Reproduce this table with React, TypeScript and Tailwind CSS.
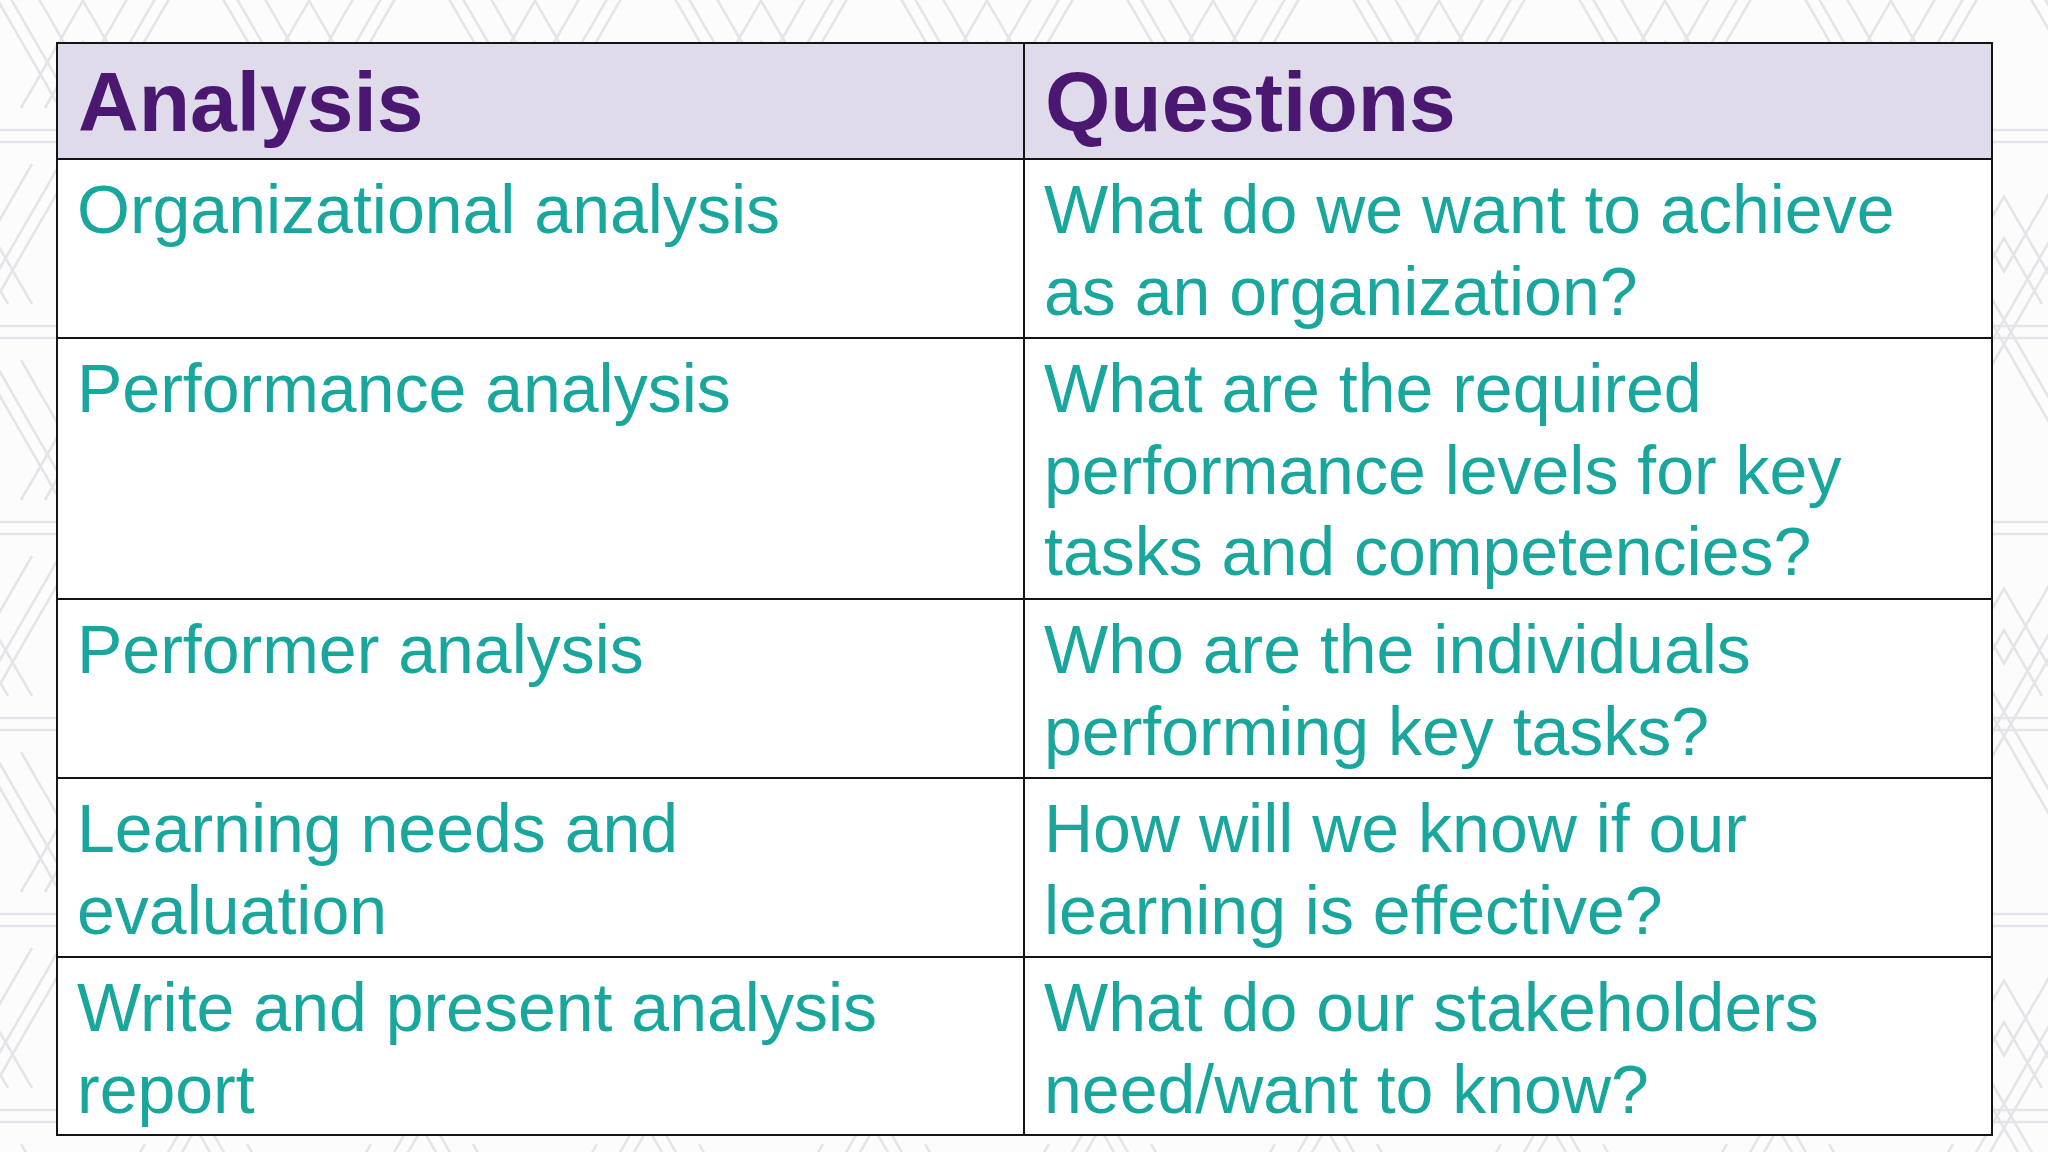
import React from "react";

const rows: { left: string[]; right: string[] }[] = [
  { left: ["Organizational analysis"], right: ["What do we want to achieve", "as an organization?"] },
  { left: ["Performance analysis"], right: ["What are the required", "performance levels for key", "tasks and competencies?"] },
  { left: ["Performer analysis"], right: ["Who are the individuals", "performing key tasks?"] },
  { left: ["Learning needs and", "evaluation"], right: ["How will we know if our", "learning is effective?"] },
  { left: ["Write and present analysis", "report"], right: ["What do our stakeholders", "need/want to know?"] },
];

function Lines({ lines }: { lines: string[] }) {
  return (
    <>
      {lines.map((l, i) => (
        <div key={i} className="whitespace-nowrap">
          {l}
        </div>
      ))}
    </>
  );
}

const S = 226;
const H = 196;

function tri(cx: number, by: number, half: number, up: boolean) {
  const h = half * 1.732;
  const ty = up ? by - h : by + h;
  return `M${cx - half} ${by} L${cx} ${ty} L${cx + half} ${by}`;
}

function Background() {
  const diag: string[] = [];
  for (const dx of [-S, 0, S]) {
    for (const off of [-7, 7]) {
      diag.push(`M${dx + off} 0 L${dx + S + off} ${2 * H}`);
      diag.push(`M${dx + S + off} 0 L${dx + off} ${2 * H}`);
    }
  }
  const horiz: string[] = [];
  for (const y of [0, H, 2 * H]) {
    for (const off of [-6, 6]) {
      horiz.push(`M0 ${y + off} L${S} ${y + off}`);
    }
  }
  const inner: string[] = [];
  // up triangles: base at y=H (apex S/2? no) -- triangles with base on y=H between x=0..S pointing up have apex (S/2,0)
  for (const dx of [-S, 0, S]) {
    inner.push(tri(dx + S / 2, H - 28, 62, true));
    inner.push(tri(dx + S / 2, H - 28, 38, true));
    inner.push(tri(dx, H + 28, 62, false));
    inner.push(tri(dx, 2 * H - 28, 62, true));
    inner.push(tri(dx, 2 * H - 28, 38, true));
    inner.push(tri(dx + S / 2, 28, 62, false));
  }
  return (
    <svg className="absolute inset-0" width="2048" height="1152" xmlns="http://www.w3.org/2000/svg">
      <defs>
        <pattern id="geo" x="-30" y="-60" width={S} height={2 * H} patternUnits="userSpaceOnUse">
          <g fill="none" stroke="#e5e5e9" strokeWidth="2.6">
            {diag.map((d, i) => (
              <path key={"d" + i} d={d} />
            ))}
            {horiz.map((d, i) => (
              <path key={"h" + i} d={d} />
            ))}
            {inner.map((d, i) => (
              <path key={"n" + i} d={d} />
            ))}
          </g>
        </pattern>
      </defs>
      <rect width="2048" height="1152" fill="#fcfcfd" />
      <rect width="2048" height="1152" fill="url(#geo)" />
    </svg>
  );
}

export default function App() {
  return (
    <div
      className="relative w-[2048px] h-[1152px] overflow-hidden bg-[#fcfcfd]"
      style={{ fontFamily: '"Liberation Sans", Arial, sans-serif' }}
    >
      <Background />
      <div className="relative pt-[42px] pl-[56px]">
        <div className="w-[1937px] bg-[#141414] p-[2px] grid grid-cols-[965px_1fr] grid-rows-[114px_177px_259px_177px_177px_176px] gap-[2px]">
          <div className="bg-[#dfdbea] flex items-center pl-[20px] pt-[3px] text-[84px] leading-[1.2] font-bold text-[#4a1870]">
            Analysis
          </div>
          <div className="bg-[#dfdbea] flex items-center pl-[20px] pt-[3px] text-[84px] leading-[1.2] font-bold text-[#4a1870]">
            Questions
          </div>
          {rows.map((r, i) => (
            <React.Fragment key={i}>
              <div className="bg-white pl-[19px] pt-[9px] text-[68px] leading-[81.6px] text-[#19a69d]">
                <Lines lines={r.left} />
              </div>
              <div className="bg-white pl-[19px] pt-[9px] text-[68px] leading-[81.6px] text-[#19a69d]">
                <Lines lines={r.right} />
              </div>
            </React.Fragment>
          ))}
        </div>
      </div>
    </div>
  );
}
